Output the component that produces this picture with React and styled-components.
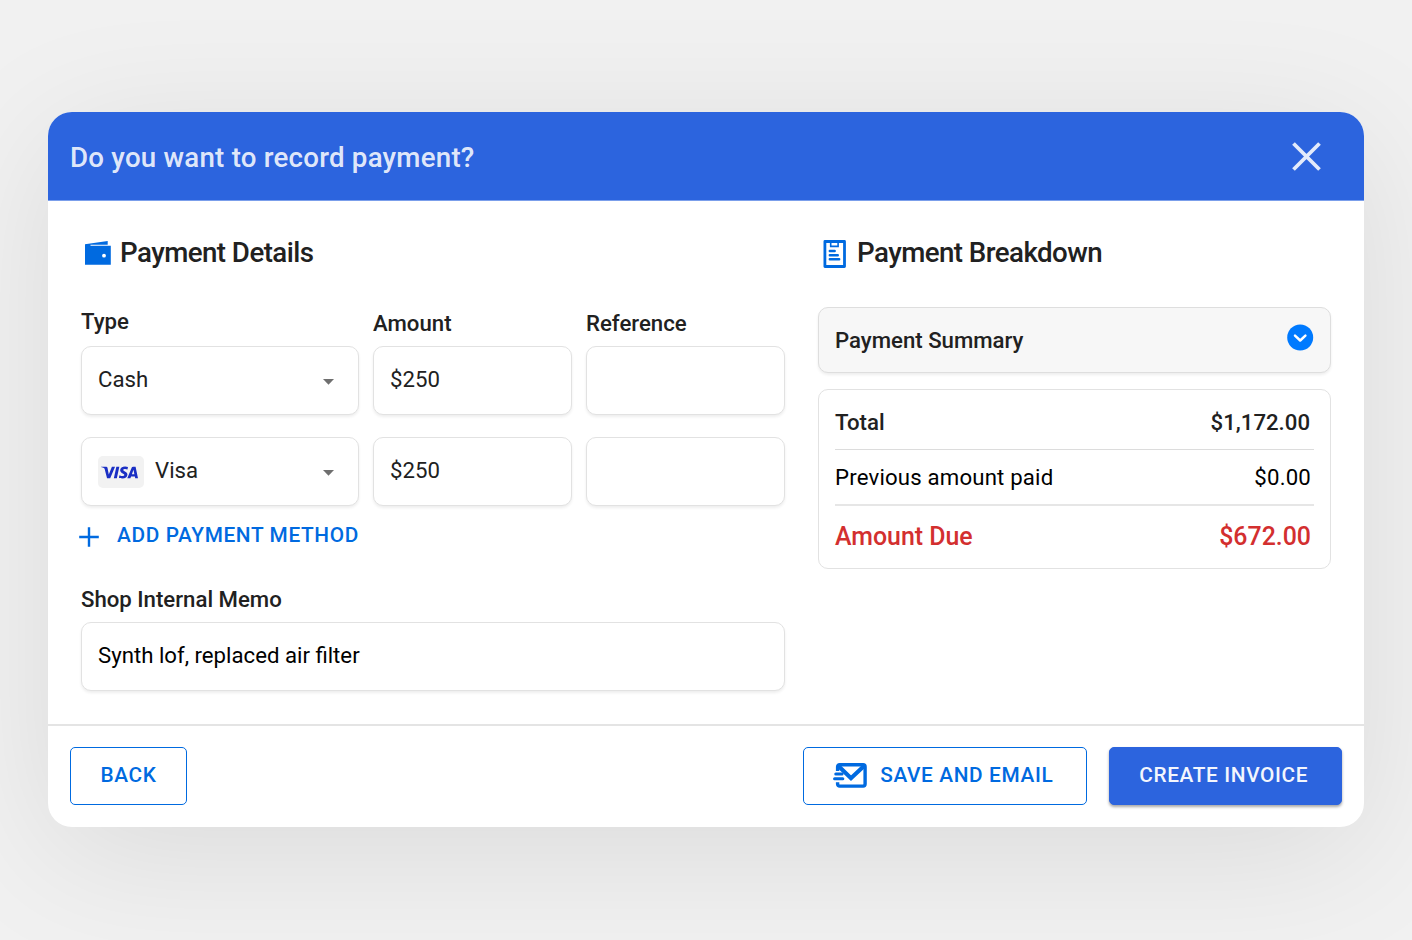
import React from 'react';
import styled, { createGlobalStyle } from 'styled-components';
import { SiVisa } from 'react-icons/si';

const payments = [
  { type: 'Cash', amount: '$250', reference: '' },
  { type: 'Visa', amount: '$250', reference: '', card: true },
];

const WalletIcon = () => (
  <svg width="26" height="24" viewBox="0 0 26 24" fill="currentColor">
    <path d="M0 3.3 22.7 0v3.8H5.5v1h20.3v19H0z" />
    <circle cx="19" cy="14.7" r="1.9" fill="#fff" />
  </svg>
);

const ReceiptIcon = () => (
  <svg width="23" height="28" viewBox="0 0 23 28" fill="none" stroke="currentColor">
    <rect x="1.9" y="1.5" width="19.6" height="25" strokeWidth="2.8" strokeLinejoin="round" />
    <path d="M7.7 1.5v4.9h7.4V1.5" strokeWidth="1.6" />
    <path d="M6.8 11h4.9M6.8 15.2h8M6.8 19.3h9.4" strokeWidth="2.4" strokeLinecap="round" />
  </svg>
);

const CloseIcon = () => (
  <svg width="29" height="29" viewBox="0 0 29 29" stroke="currentColor" strokeWidth="3.8">
    <path d="M1.5 1.5l26 26M27.5 1.5l-26 26" />
  </svg>
);

const PlusIcon = () => (
  <svg width="20" height="20" viewBox="0 0 20 20" stroke="currentColor" strokeWidth="2.4">
    <path d="M10 0.2v19.6M0.2 10h19.6" />
  </svg>
);

const CaretIcon = () => (
  <svg width="11" height="6" viewBox="0 0 11 6" fill="#6f6f6f">
    <path d="M0 0h11L5.5 5.7z" />
  </svg>
);

const ChevronIcon = () => (
  <svg width="27" height="27" viewBox="0 0 27 27" fill="none">
    <circle cx="13.2" cy="13.5" r="13" fill="#007aff" />
    <path
      d="M8 11.6l5.2 4.9 5.2-4.9"
      stroke="#fff"
      strokeWidth="2.5"
      strokeLinecap="round"
      strokeLinejoin="round"
    />
  </svg>
);

const SendMailIcon = () => (
  <svg width="34" height="25" viewBox="0 0 34 25" fill="none" stroke="currentColor">
    <path
      d="M4.6 8V3.7a2 2 0 0 1 2-2h23.5a2 2 0 0 1 2 2v17.4a2 2 0 0 1-2 2H6.6a2 2 0 0 1-2-2v-1.8"
      strokeWidth="3.4"
    />
    <path d="M5.4 3L18 15.2 31 3" strokeWidth="4.2" />
    <path d="M2.8 11h6.2M1.6 15.8h8.2" strokeWidth="3.1" strokeLinecap="round" />
  </svg>
);

const App = () => {
  return (
    <Page>
      <GlobalStyle />
      <Dialog>
        <Header>
          <Title>Do you want to record payment?</Title>
          <CloseButton aria-label="Close">
            <CloseIcon />
          </CloseButton>
        </Header>
        <Body>
          <Details>
            <Heading>
              <WalletIcon />
              Payment Details
            </Heading>
            <FieldGrid>
              <Label $raised>Type</Label>
              <Label>Amount</Label>
              <Label>Reference</Label>
            </FieldGrid>
            <Rows>
              {payments.map((item) => (
                <FieldGrid key={item.type}>
                  <Field>
                    {item.card && (
                      <CardChip>
                        <SiVisa size={37} />
                      </CardChip>
                    )}
                    <FieldText>{item.type}</FieldText>
                    <CaretIcon />
                  </Field>
                  <Field>
                    <FieldText>{item.amount}</FieldText>
                  </Field>
                  <Field>
                    <FieldText>{item.reference}</FieldText>
                  </Field>
                </FieldGrid>
              ))}
            </Rows>
            <AddButton>
              <PlusIcon />
              <AddText>Add payment method</AddText>
            </AddButton>
            <MemoLabel>Shop Internal Memo</MemoLabel>
            <Field>
              <MemoText>Synth lof, replaced air filter</MemoText>
            </Field>
          </Details>
          <Breakdown>
            <Heading $wide>
              <ReceiptIcon />
              Payment Breakdown
            </Heading>
            <Summary>
              Payment Summary
              <SummaryToggle aria-label="Toggle summary">
                <ChevronIcon />
              </SummaryToggle>
            </Summary>
            <Totals>
              <TotalRow>
                <span>Total</span>
                <span>$1,172.00</span>
              </TotalRow>
              <PreviousRow>
                <span>Previous amount paid</span>
                <span>$0.00</span>
              </PreviousRow>
              <DueRow>
                <span>Amount Due</span>
                <span>$672.00</span>
              </DueRow>
            </Totals>
          </Breakdown>
        </Body>
        <Footer>
          <Button $width={117}>Back</Button>
          <Actions>
            <Button $width={284} $shift>
              <SendMailIcon />
              Save and email
            </Button>
            <Button $width={233} $shift $primary>
              Create invoice
            </Button>
          </Actions>
        </Footer>
      </Dialog>
    </Page>
  );
};

const GlobalStyle = createGlobalStyle`
  *, *::before, *::after {
    box-sizing: border-box;
  }
  body {
    margin: 0;
    background: #f1f1f1;
    font-family: Roboto, "Liberation Sans", sans-serif;
    color: #212121;
  }
  button {
    font-family: inherit;
    border: 0;
    padding: 0;
    background: none;
    cursor: pointer;
  }
  svg {
    flex-shrink: 0;
  }
`;

const Page = styled.div`
  height: 940px;
  padding: 112px 48px 0;
  overflow: hidden;
`;

const Dialog = styled.div`
  display: flex;
  flex-direction: column;
  height: 715px;
  border-radius: 24px;
  background: #fff;
  overflow: hidden;
  box-shadow: 0 26px 140px rgba(0, 0, 0, 0.096);
`;

const Header = styled.header`
  display: flex;
  align-items: center;
  justify-content: space-between;
  height: 89px;
  padding: 0 43px 0 22px;
  border-bottom: 1px solid #7b9feb;
  background: #2c64de;
  color: rgba(255, 255, 255, 0.87);
`;

const Title = styled.h1`
  margin: 0;
  padding-top: 3px;
  font-weight: 500;
  font-size: 27.7px;
  line-height: 40px;
  letter-spacing: 0.22px;
`;

const CloseButton = styled.button`
  display: flex;
  color: inherit;
`;

const Body = styled.div`
  display: flex;
  justify-content: space-between;
  flex: 1;
  padding: 32px 33px 0;
`;

const Details = styled.section`
  width: 704px;
`;

const Breakdown = styled.section`
  width: 513px;
`;

const Heading = styled.h2`
  display: flex;
  align-items: center;
  gap: ${(props) => (props.$wide ? '11px' : '9px')};
  height: 40px;
  margin: 0 0 ${(props) => (props.$wide ? '34px' : '33px')};
  padding-left: ${(props) => (props.$wide ? '5px' : '4px')};
  font-weight: 500;
  font-size: 27.7px;
  line-height: 40px;
  letter-spacing: -0.55px;

  svg {
    margin-top: ${(props) => (props.$wide ? '2px' : '0')};
    color: #006ae0;
  }
`;

const FieldGrid = styled.div`
  display: grid;
  grid-template-columns: 278px 199px 199px;
  column-gap: 14px;
`;

const Label = styled.div`
  height: 40px;
  padding-top: ${(props) => (props.$raised ? '2px' : '4px')};
  font-weight: 500;
  font-size: 22.2px;
  line-height: 26px;
`;

const Rows = styled.div`
  display: grid;
  row-gap: 22px;
`;

const Field = styled.div`
  display: flex;
  align-items: center;
  height: 69px;
  padding: 0 24px 0 16px;
  border: 1px solid #e2e2e2;
  border-radius: 10px;
  background: #fff;
  box-shadow: 0 2px 3px rgba(0, 0, 0, 0.07);

  > svg {
    margin-top: 3px;
  }
`;

const FieldText = styled.span`
  flex: 1;
  padding-bottom: 3px;
  font-size: 22.2px;
  line-height: 26px;
`;

const MemoText = styled(FieldText)`
  color: #000;
`;

const CardChip = styled.span`
  display: flex;
  align-items: center;
  justify-content: center;
  width: 46px;
  height: 32px;
  margin: 1px 11px 0 0;
  padding-right: 3px;
  border-radius: 5px;
  background: #f2f2f2;
  color: #1a2fc4;
`;

const AddButton = styled.button`
  display: flex;
  align-items: center;
  gap: 18px;
  height: 26px;
  margin: 18px 0 0 -2px;
  color: #006ae0;
`;

const AddText = styled.span`
  padding-bottom: 5px;
  font-weight: 500;
  font-size: 20.8px;
  line-height: 26px;
  letter-spacing: 0.64px;
  text-transform: uppercase;
`;

const MemoLabel = styled.div`
  height: 36px;
  margin-top: 36px;
  font-weight: 500;
  font-size: 22.2px;
  line-height: 26px;
`;

const Summary = styled.div`
  display: flex;
  align-items: center;
  justify-content: space-between;
  height: 66px;
  padding: 0 16px;
  border: 1px solid #dedede;
  border-radius: 10px;
  background: #f7f7f7;
  box-shadow: 0 2px 3px rgba(0, 0, 0, 0.07);
  font-weight: 500;
  font-size: 22.2px;
  line-height: 26px;
`;

const SummaryToggle = styled.button`
  display: flex;
  margin-bottom: 5px;
`;

const Totals = styled.div`
  height: 180px;
  margin-top: 16px;
  padding: 4px 16px 0;
  border: 1px solid #e2e2e2;
  border-radius: 10px;
`;

const TotalRow = styled.div`
  display: flex;
  align-items: center;
  justify-content: space-between;
  height: 56px;
  padding: 1px 4px 0 0;
  border-bottom: 1px solid #dcdcdc;
  font-weight: 500;
  font-size: 22.2px;
`;

const PreviousRow = styled(TotalRow)`
  padding: 0 3px 0 0;
  border-bottom: 2px solid #e6e6e6;
  font-weight: 400;
  letter-spacing: 0.18px;
  color: #000;
`;

const DueRow = styled(TotalRow)`
  height: 61px;
  padding: 0 3px 0 0;
  border-bottom: 0;
  font-size: 24.9px;
  color: #d32f2f;
`;

const Footer = styled.footer`
  display: flex;
  justify-content: space-between;
  height: 103px;
  padding: 21px 22px 0;
  border-top: 2px solid #e4e4e4;
`;

const Actions = styled.div`
  display: flex;
  gap: 22px;
`;

const Button = styled.button`
  display: flex;
  align-items: center;
  justify-content: center;
  gap: 13px;
  width: ${(props) => props.$width}px;
  height: 58px;
  padding: 0 ${(props) => (props.$shift ? '3.5px' : '0')} 2px 0;
  border: 1px solid ${(props) => (props.$primary ? '#2c64de' : '#006ae0')};
  border-radius: 5px;
  background: ${(props) => (props.$primary ? '#2c64de' : '#fff')};
  box-shadow: ${(props) => (props.$primary ? '0 2px 3px rgba(0, 0, 0, 0.35)' : 'none')};
  color: ${(props) => (props.$primary ? '#f3f6fd' : '#006ae0')};
  font-weight: 500;
  font-size: 20.8px;
  letter-spacing: 0.64px;
  text-transform: uppercase;

  svg {
    margin-top: 1px;
  }
`;

export default App;
